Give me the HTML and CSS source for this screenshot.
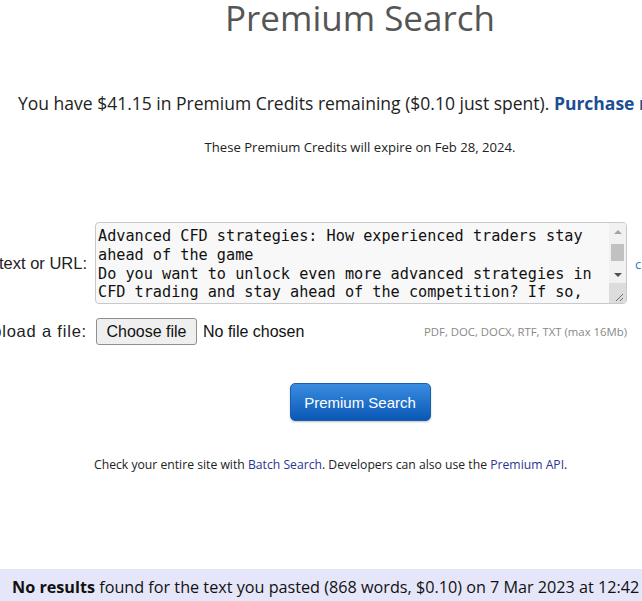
FILE: index.html
```html
<!DOCTYPE html>
<html>
<head>
<meta charset="utf-8">
<title>Premium Search</title>
<link rel="stylesheet" href="styles.css">
</head>
<body>
<div class="page">
  <h1 class="title">Premium Search</h1>
  <p class="credits">You have $41.15 in Premium Credits remaining ($0.10 just spent). <a class="purchase" href="#">Purchase more credits</a></p>
  <p class="expiry">These Premium Credits will expire on Feb 28, 2024.</p>

  <form class="form">
    <div class="label"><span>Paste text or URL:</span></div>
    <div class="textbox">
      <textarea class="text" spellcheck="false">Advanced CFD strategies: How experienced traders stay ahead of the game
Do you want to unlock even more advanced strategies in CFD trading and stay ahead of the competition? If so, you have come to the right place. In this article we will look at the techniques that experienced traders use to manage risk, read the market and stay one step ahead.</textarea>
      <div class="scrollbar">
        <div class="sb-btn"><span class="arrow-up"></span></div>
        <div class="sb-track"><div class="sb-thumb"></div></div>
        <div class="sb-btn"><span class="arrow-down"></span></div>
        <div class="sb-corner">
          <svg width="17" height="20" viewBox="0 0 17 20">
            <line x1="14" y1="11" x2="7" y2="18" stroke="#6d6d6d" stroke-width="1"/>
            <line x1="14" y1="15" x2="11" y2="18" stroke="#6d6d6d" stroke-width="1"/>
          </svg>
        </div>
      </div>
    </div>
    <div class="side"><a class="side-link" href="#">clear</a></div>

    <div class="label upload-label"><span>Upload a file:</span></div>
    <div class="file-field">
      <div class="file">
        <button class="file-btn" type="button">Choose file</button>
        <span class="file-status">No file chosen</span>
      </div>
      <span class="hint">PDF, DOC, DOCX, RTF, TXT (max 16Mb)</span>
    </div>
    <div class="side"></div>
  </form>

  <div class="submit-row">
    <button class="submit" type="button">Premium Search</button>
  </div>

  <div class="form note-row">
    <div class="label"></div>
    <p class="note">Check your entire site with <a href="#">Batch Search</a>. Developers can also use the <a href="#">Premium API</a>.</p>
  </div>

  <div class="result">
    <b>No results</b> found for the text you pasted (868 words, $0.10) on 7 Mar 2023 at 12:42 UTC.
  </div>
</div>
</body>
</html>
```

FILE: styles.css
```css
html, body {
  margin: 0;
  padding: 0;
  background: #fff;
  overflow: hidden;
}

body {
  font-family: "Open Sans", "Liberation Sans", sans-serif;
  color: #222;
}

.page {
  width: 720px;
}

.title {
  margin: 0;
  font-weight: 400;
  font-size: 35px;
  line-height: 36px;
  color: #555;
  text-align: center;
}

.credits {
  margin: 55px 0 0;
  padding-left: 18px;
  font-size: 17.5px;
  line-height: 24px;
  white-space: nowrap;
  color: #222;
}

.purchase {
  color: #1b4f94;
  font-weight: 700;
  text-decoration: none;
}

.expiry {
  margin: 23px 0 0;
  font-size: 13.1px;
  line-height: 18px;
  text-align: center;
  color: #222;
}

.form {
  display: grid;
  grid-template-columns: 87px 532px 1fr;
  column-gap: 8px;
  row-gap: 14px;
  margin-top: 66px;
  align-items: center;
}

.label {
  display: flex;
  justify-content: flex-end;
  font-family: "Liberation Sans", Arial, sans-serif;
  font-size: 16.5px;
  color: #222;
  white-space: nowrap;
}

.upload-label {
  letter-spacing: 0.8px;
}

.textbox {
  display: flex;
  box-sizing: border-box;
  width: 532px;
  height: 82px;
  border: 1px solid #c9c9c9;
  border-radius: 4px;
  background: #f8f8f8;
  overflow: hidden;
}

.text {
  flex: 1;
  min-width: 0;
  margin: 0;
  padding: 4px 2px 0;
  border: 0;
  outline: none;
  background: transparent;
  font-family: "DejaVu Sans Mono", monospace;
  font-size: 15.2px;
  line-height: 18.8px;
  color: #111;
  resize: none;
  overflow: hidden;
}

.scrollbar {
  display: flex;
  flex-direction: column;
  width: 17px;
  background: #f1f1f1;
}

.sb-btn {
  display: flex;
  align-items: center;
  justify-content: center;
  height: 17px;
}

.arrow-up {
  width: 0;
  height: 0;
  border-left: 4px solid transparent;
  border-right: 4px solid transparent;
  border-bottom: 4px solid #a3a3a3;
}

.arrow-down {
  width: 0;
  height: 0;
  border-left: 4px solid transparent;
  border-right: 4px solid transparent;
  border-top: 4px solid #505050;
}

.sb-track {
  flex: 1;
  padding: 4px 2px 5px;
  display: flex;
}

.sb-thumb {
  flex: 1;
  background: #c1c1c1;
}

.sb-corner {
  height: 20px;
  background: #dcdcdc;
  display: flex;
}

.side {
  font-size: 13px;
  padding-top: 2px;
}

.side-link {
  color: #3a78c0;
  text-decoration: none;
}

.file-field {
  display: flex;
  justify-content: space-between;
  align-items: center;
}

.file {
  display: flex;
  align-items: center;
  font-family: "Liberation Sans", Arial, sans-serif;
  font-size: 16px;
  color: #111;
}

.file-btn {
  box-sizing: border-box;
  width: 101px;
  height: 27px;
  margin: 0 6px 0 1px;
  padding: 0;
  border: 1px solid #8f8f8f;
  border-radius: 3px;
  background: #efefef;
  font-family: "Liberation Sans", Arial, sans-serif;
  font-size: 16px;
  color: #111;
}

.hint {
  font-size: 11.35px;
  color: #888;
}

.submit-row {
  display: flex;
  justify-content: center;
  margin-top: 38px;
}

.submit {
  width: 141px;
  height: 38px;
  border: 1px solid #1c5eae;
  border-radius: 5px;
  background: linear-gradient(#3a8ce0, #0a58b6);
  color: #fff;
  font-family: "Liberation Sans", Arial, sans-serif;
  font-size: 15px;
  box-shadow: 0 1px 2px rgba(0,0,0,0.25);
  cursor: pointer;
}

.note-row {
  margin-top: 36px;
}

.note {
  grid-column: 2 / 4;
  margin: 0 0 0 -1px;
  font-size: 12.2px;
  line-height: 16px;
  color: #222;
}

.note a {
  color: #2b3590;
  text-decoration: none;
}

.result {
  margin-top: 96px;
  padding: 7px 12px 12px;
  background: #e6e6fa;
  font-size: 16.2px;
  line-height: 22px;
  color: #111;
  white-space: nowrap;
}

.result b {
  font-weight: 700;
}
```
